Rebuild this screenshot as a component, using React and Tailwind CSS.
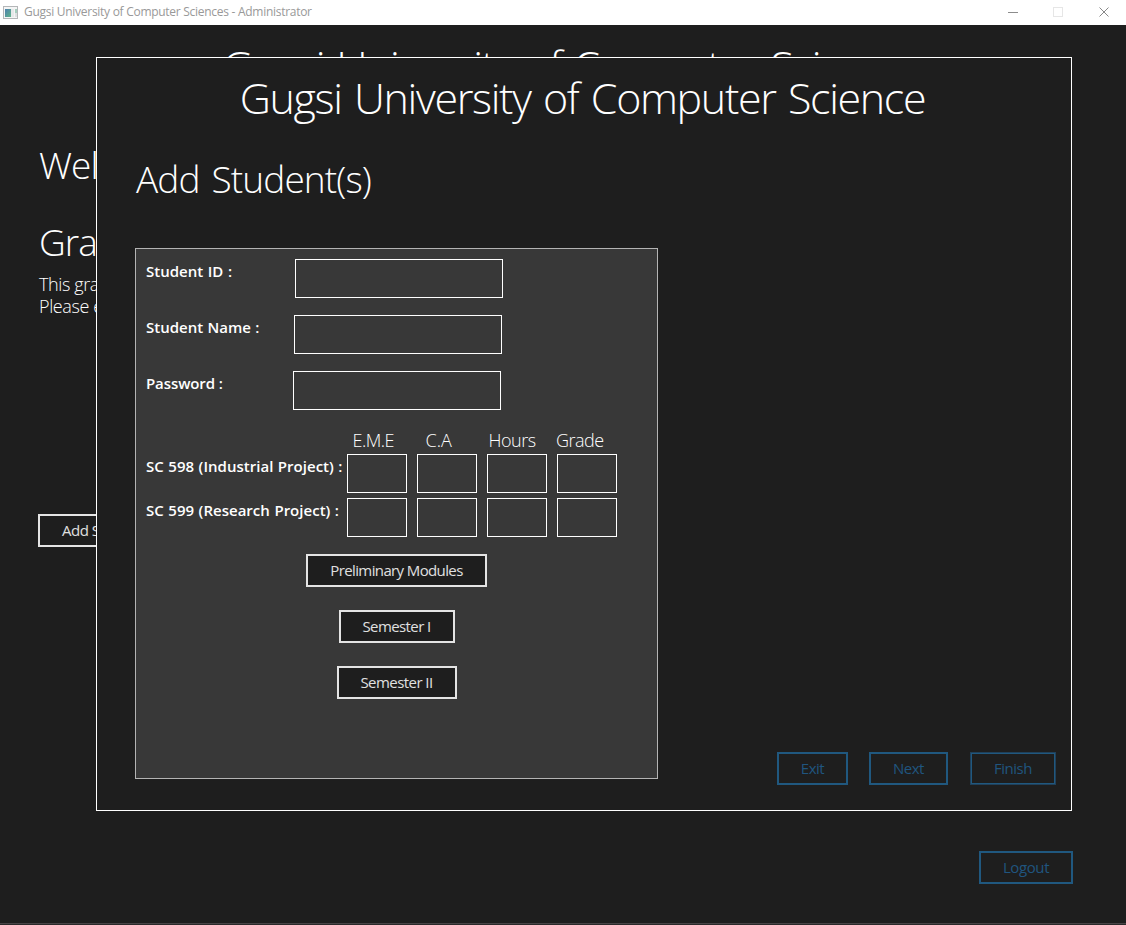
const FONT = "font-['Open_Sans','Noto_Sans',sans-serif]";

const TITLE =
  "h-[60px] whitespace-nowrap text-center text-[43px] leading-[60px] font-[330] tracking-[-1.35px] [word-spacing:2.6px]";

const HEADING = "h-[52px] text-[37px] leading-[52px] font-[330] tracking-[-0.9px] [word-spacing:3.3px]";

function OutlineButton({ className, children }) {
  return (
    <button
      type="button"
      className={`flex h-[33px] shrink-0 items-center bg-[#1e1e1e] pb-[2px] text-[15px] leading-5 whitespace-nowrap ${className}`}
    >
      {children}
    </button>
  );
}

function AppIcon() {
  return (
    <svg width="16" height="14" viewBox="0 0 16 14" className="shrink-0">
      <defs>
        <linearGradient id="pane" x1="0" y1="0" x2="1" y2="1">
          <stop offset="0" stopColor="#4d7fae" />
          <stop offset="1" stopColor="#5fb58a" />
        </linearGradient>
      </defs>
      <rect x="0.5" y="0.5" width="14" height="12" fill="#f4f5f5" stroke="#b4b6b8" />
      <rect x="2" y="3" width="6" height="8" fill="url(#pane)" />
      <rect x="8" y="3" width="3" height="8" fill="#e6e8e9" />
      <rect x="12" y="3" width="2" height="4" fill="#a5cdbd" />
      <rect x="12" y="7" width="2" height="4" fill="#dcdfe0" />
    </svg>
  );
}

function TitleBar() {
  return (
    <header className="flex h-[25px] shrink-0 items-center bg-white pl-[3px] text-[#999]">
      <AppIcon />
      <span className="ml-[5px] pb-px text-[12px] leading-4 tracking-[-0.28px] whitespace-nowrap">
        Gugsi University of Computer Sciences - Administrator
      </span>
      <div className="ml-auto flex items-start pr-4">
        <svg width="10" height="11" viewBox="0 0 10 11">
          <path d="M0 5.5h10" stroke="#8c8c8c" />
        </svg>
        <svg width="10" height="10" viewBox="0 0 10 10" className="ml-[35px]">
          <rect x="0.5" y="0.5" width="9" height="9" fill="none" stroke="#e6e6e6" />
        </svg>
        <svg width="11" height="11" viewBox="0 0 11 11" className="ml-9">
          <path d="M0.5 0.5l9 9M9.5 0.5l-9 9" stroke="#888" />
        </svg>
      </div>
    </header>
  );
}

function Field({ label, className }) {
  return (
    <div className="flex h-14 items-start">
      <label className={`mt-[2px] shrink-0 text-[15px] leading-5 font-semibold whitespace-nowrap ${className}`}>
        {label}
      </label>
      <input className="h-[39px] w-[208px] border border-white bg-transparent px-2 outline-none" />
    </div>
  );
}

function ProjectRow({ label }) {
  return (
    <div className="flex h-11 items-start">
      <span className="mt-[2px] w-[201px] shrink-0 text-[15px] leading-5 font-semibold tracking-[0.02px] whitespace-nowrap [word-spacing:0.6px]">
        {label}
      </span>
      <div className="flex gap-[10px]">
        {[0, 1, 2, 3].map((i) => (
          <input key={i} className="h-[39px] w-[60px] border border-white bg-transparent px-1 outline-none" />
        ))}
      </div>
    </div>
  );
}

function StudentForm() {
  return (
    <section className="ml-[38px] h-[531px] w-[523px] border border-[#b4b4b4] bg-[#383838] pt-[10px] pl-[10px]">
      <Field label="Student ID :" className="w-[149px] [word-spacing:0.7px]" />
      <Field label="Student Name :" className="w-[148px] [word-spacing:0.5px]" />
      <Field label="Password :" className="w-[147px] tracking-[-0.1px]" />
      <div className="flex h-[27px] items-center pb-[2px] pl-[206.5px] text-[18px] leading-6 font-light tracking-[-0.5px]">
        <span className="w-[73px]">E.M.E</span>
        <span className="w-[63px] tracking-[0px]">C.A</span>
        <span className="w-[67.5px]">Hours</span>
        <span className="tracking-[-0.5px]">Grade</span>
      </div>
      <ProjectRow label="SC 598 (Industrial Project) :" />
      <ProjectRow label="SC 599 (Research Project) :" />
      <div className="mt-3 flex flex-col items-center gap-[23px] pr-[10px] text-[#e0e0e0]">
        <OutlineButton className="w-[181px] justify-center border-2 border-[#e4e4e4] tracking-[-0.62px]">
          Preliminary Modules
        </OutlineButton>
        <OutlineButton className="w-[116px] justify-center border-2 border-[#e4e4e4] tracking-[-0.6px]">
          Semester I
        </OutlineButton>
        <OutlineButton className="w-[120px] justify-center border-2 border-[#e4e4e4] tracking-[-0.55px]">
          Semester II
        </OutlineButton>
      </div>
    </section>
  );
}

function AddStudentDialog() {
  return (
    <div
      role="dialog"
      className="absolute top-8 left-24 flex h-[754px] w-[976px] flex-col border border-white bg-[#1e1e1e]"
    >
      <h1 className={`mt-[10px] pr-[3px] ${TITLE}`}>Gugsi University of Computer Science</h1>
      <h2 className={`mt-[25px] ml-[39px] ${HEADING}`}>Add Student(s)</h2>
      <div className="mt-[43px] flex items-end">
        <StudentForm />
        <div className="mr-[15px] mb-[-6px] ml-auto flex tracking-[-0.5px] text-[#20557f]">
          <OutlineButton className="w-[71px] justify-center border-2 border-[#20587f]">Exit</OutlineButton>
          <OutlineButton className="ml-[21px] w-[79px] justify-center border-2 border-[#20587f]">Next</OutlineButton>
          <OutlineButton className="ml-[22px] w-[86px] justify-center border border-[#20405a] inset-ring inset-ring-[#20587f]">
            Finish
          </OutlineButton>
        </div>
      </div>
    </div>
  );
}

export default function App() {
  return (
    <div className={`flex h-[925px] w-[1126px] flex-col overflow-hidden bg-[#1e1e1e] text-white ${FONT}`}>
      <TitleBar />
      <main className="relative flex min-h-0 flex-1 flex-col border-b border-[#2a2a2a]">
        <h1 className={`mt-[11px] pl-[4px] ${TITLE}`}>Gugsi University of Computer Science</h1>
        <h2 className={`mt-[43px] ml-[39px] ${HEADING}`}>Welcome</h2>
        <h2 className={`mt-[25px] ml-[39px] ${HEADING}`}>Grading</h2>
        <p className="mt-[5px] ml-[39px] h-[45px] text-[18px] leading-[22px] font-light tracking-[-0.4px]">
          This grading
          <br />
          Please enter
        </p>
        <OutlineButton className="mt-[196px] ml-[38px] w-[140px] border-2 border-[#e4e4e4] pl-[22px] tracking-[-0.5px] text-[#e0e0e0]">
          Add Student
        </OutlineButton>
        <div className="mt-auto mr-[53px] mb-[39px] flex justify-end tracking-[-0.4px] text-[#20557f]">
          <OutlineButton className="w-[94px] justify-center border-2 border-[#20587f]">Logout</OutlineButton>
        </div>
        <div className="h-px shrink-0 bg-[#484446]" />
        <AddStudentDialog />
      </main>
    </div>
  );
}
